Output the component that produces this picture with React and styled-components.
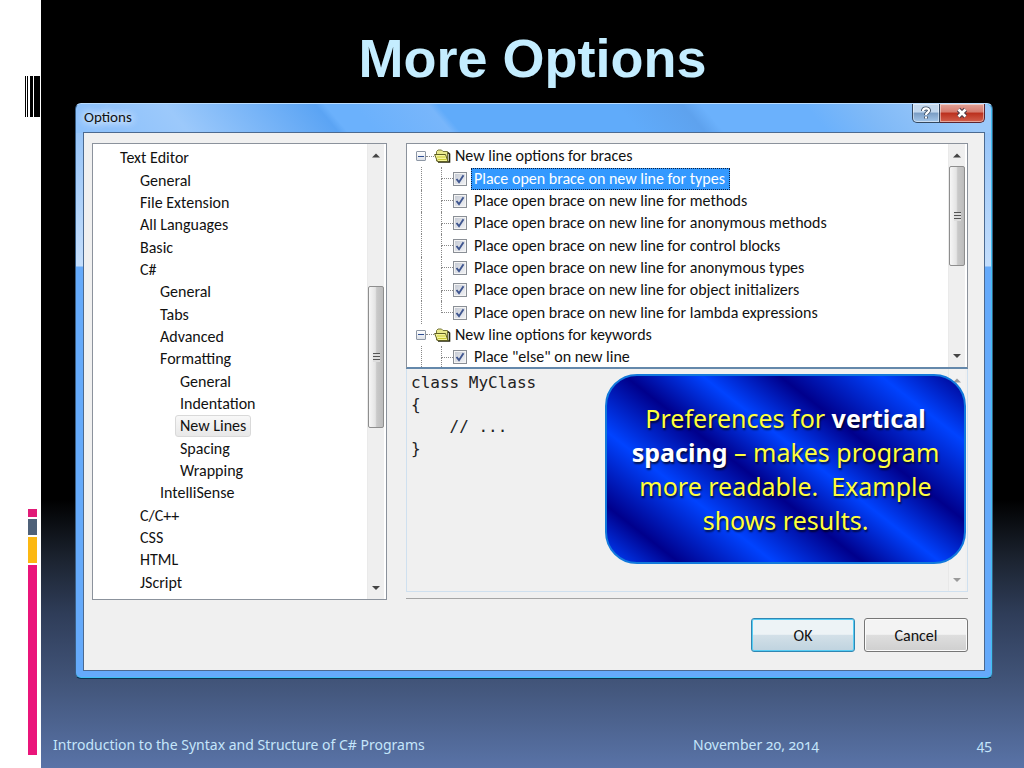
import React from 'react'
import styled, { createGlobalStyle, css } from 'styled-components'

const uiFont = `Carlito, Lato, 'Open Sans', sans-serif`
const slideFont = `Corbel, 'Noto Sans', sans-serif`

const GlobalStyle = createGlobalStyle`
  * { box-sizing: border-box; }
  body {
    margin: 0;
    background: #000;
  }
`

const Slide = styled.div`
  display: flex;
  min-height: 100vh;
  background: #fff;
`

// left decoration
const Rail = styled.aside`
  display: flex;
  flex-direction: column;
  flex: none;
  width: 41px;
  padding: 76px 1px 13px 25px;
`
const Barcode = styled.div`
  height: 41px;
  background: linear-gradient(
    to right,
    #000 0 1px, #fff 1px 2px, #000 2px 3px, #fff 3px 5px,
    #000 5px 8px, #fff 8px 9px, #000 9px 100%
  );
`
const Blocks = styled.div`
  display: flex;
  flex-direction: column;
  gap: 2px;
  width: 9px;
  margin: auto 0 0 3px;
`
const Block = styled.span`
  height: ${p => p.$size}px;
  background: ${p => p.$color};
`

const Main = styled.main`
  display: flex;
  flex-direction: column;
  flex: 1;
  min-width: 0;
  background: linear-gradient(
    to bottom,
    #000 0%, #000 65%, #1c2431 73%, #2f3d59 80%, #42557a 89%, #5973a7 100%
  );
`
const Title = styled.h1`
  margin: 0;
  height: 103px;
  padding-top: 23px;
  text-align: center;
  font: bold 54px/70px 'Arial Rounded MT Bold', 'Liberation Sans', sans-serif;
  color: #c4edff;
`

// dialog frame
const Dialog = styled.section`
  display: flex;
  flex-direction: column;
  flex: 1;
  margin: 0 31px 0 34px;
  padding: 0 7px 7px;
  border: 1px solid #3a5f86;
  border-top-color: #b9dcff;
  border-bottom-color: #0b3350;
  border-radius: 6px;
  box-shadow: inset 0 -1px 0 #3fc0f0, inset -1px 0 0 #3fc0f0;
  background:
    linear-gradient(50deg, #8fc2fb 0 4%, #9cc9fb 12%, #5ba4f4 28%, #6bb1fc 29% 32%, #78b6fb 40%, #60abfa 41% 60%, #5ea2ee 67%, #6bb1fc 69% 80%, #7fb9f7 86%, #9cc9fa 96%) top / 100% 29px no-repeat,
    linear-gradient(to bottom, #8fc0f8, #c4defc 162px, #65aafb 163px);
  font-family: ${uiFont};
  font-size: 16px;
  color: #111;
`
const TitleBar = styled.header`
  display: flex;
  justify-content: space-between;
  align-items: flex-start;
  height: 28px;
`
const Caption = styled.h2`
  margin: 0;
  padding: 0 1px;
  font: inherit;
  font-size: 15px;
  line-height: 27px;
  text-shadow: 0 0 8px #fff, 0 0 8px #fff;
`
const CaptionButtons = styled.div`
  display: flex;
`
const CaptionButton = styled.button`
  display: grid;
  place-items: center;
  width: ${p => (p.$close ? 45 : 28)}px;
  height: 19px;
  padding: 0;
  border: 1px solid #33475f;
  border-top: 0;
  border-radius: ${p => (p.$close ? '0 0 5px 0' : '0 0 0 5px')};
  box-shadow: inset 0 0 0 1px rgba(255, 255, 255, 0.45);
  background: linear-gradient(to bottom, #c3d8ee 0 45%, #7a9dc4 50%, #a4c6ea);
  ${p => p.$close && css`
    border-left: 0;
    border-color: #5b2430;
    background: linear-gradient(to bottom, #e3a298 0, #d57a6d 45%, #bb2f1d 50%, #d2604d);
  `}
`

const Client = styled.div`
  display: flex;
  flex-direction: column;
  flex: 1;
  padding: 10px 16px 18px 8px;
  border: 1px solid #4c6a90;
  background: #f0f0f0;
`
const Columns = styled.div`
  display: grid;
  grid-template-columns: 295fr 562fr;
  flex: 1;
  gap: 19px;
`
const CategoryPane = styled.nav`
  display: flex;
  border: 1px solid #8b929c;
  padding-right: 2px;
  background: #fff;
`
const Categories = styled.ul`
  display: grid;
  grid-auto-rows: 1fr;
  flex: 1;
  margin: 0;
  padding: 3px 0 5px;
  list-style: none;
`
const Category = styled.li`
  display: flex;
  align-items: center;
  padding-left: ${p => 22 + p.$depth * 20}px;
`
const CategoryLink = styled.a`
  padding: 0 4px;
  border: 1px solid ${p => (p.$current ? '#d9d9d9' : 'transparent')};
  border-radius: 3px;
  background: ${p => (p.$current ? 'linear-gradient(#f8f8f8, #e8e8e8)' : 'none')};
  line-height: 20px;
  color: inherit;
  text-decoration: none;
`

// scroll bars
const Bar = styled.div`
  display: flex;
  flex-direction: column;
  flex: none;
  width: 17px;
  background: ${p => (p.$disabled ? '#f2f2f2' : '#efefef')};
  border-left: 1px solid ${p => (p.$disabled ? '#e8e8e8' : '#eaeaea')};
`
const Arrow = styled.svg`
  flex: none;
  width: 16px;
  height: 22px;
  fill: ${p => (p.$disabled ? '#9a9a9a' : '#444')};
`
const Gap = styled.span`
  flex: ${p => p.$grow};
`
const Thumb = styled.span`
  flex: ${p => p.$grow};
  display: grid;
  place-items: center;
  border: 1px solid #8e8e8e;
  border-radius: 2px;
  background: linear-gradient(to right, #f6f6f6, #e4e4e4 45%, #c9c9c9 55%, #bcbcbc);
`
const Grip = styled.span`
  width: 7px;
  height: 9px;
  background: repeating-linear-gradient(to bottom, #555 0 1px, #ddd 1px 3px);
`

const Details = styled.div`
  display: flex;
  flex-direction: column;
  min-width: 0;
  border-bottom: 1px solid #a5a5a5;
  padding-bottom: 6px;
  margin-bottom: 1px;
  position: relative;
`
const TreePane = styled.div`
  display: flex;
  flex: 224;
  min-height: 0;
  padding-right: 2px;
  border: 1px solid #8b929c;
  border-bottom: 2px solid #6488ab;
  background: #fff;
  overflow: hidden;
`
// the last row runs on under the pane's edge
const Tree = styled.ul`
  display: grid;
  grid-auto-rows: 1fr;
  flex: 1;
  margin: 0 0 -2px;
  padding: 1px 0 0 9px;
  list-style: none;
`
const TreeRow = styled.li`
  display: flex;
  align-items: center;
`
const Dash = styled.span`
  width: 8px;
  border-top: 1px dotted #888;
`
const Expander = styled.button`
  display: grid;
  place-items: center;
  width: 10px;
  height: 10px;
  padding: 0;
  border: 1px solid #8d97a5;
  border-radius: 1px;
  background: linear-gradient(#fff, #dde1e8);
  &::before {
    content: '';
    width: 6px;
    height: 1px;
    background: #2f4f94;
  }
`
const GroupName = styled.span`
  padding-left: 4px;
  line-height: 22px;
`
const Trunk = styled.span`
  align-self: stretch;
  width: 20px;
  margin-left: 5px;
  border-left: 1px dotted #888;
`
const Branch = styled.span`
  display: flex;
  flex-direction: column;
  align-self: stretch;
  width: 12px;
  &::before {
    content: '';
    flex: 1;
    border-left: 1px dotted #888;
    border-bottom: 1px dotted #888;
  }
  &::after {
    content: '';
    flex: 1;
    border-left: 1px dotted ${p => (p.$last ? 'transparent' : '#888')};
  }
`
const Option = styled.label`
  display: flex;
  align-items: center;
  gap: 4px;
`
const CheckCell = styled.span`
  display: grid;
  place-items: center;
  > * { grid-area: 1 / 1; }
  svg { pointer-events: none; }
`
const CheckBox = styled.input`
  appearance: none;
  width: 14px;
  height: 14px;
  margin: 0;
  border: 1px solid #8a8f96;
  box-shadow: inset 0 0 0 1px #f4f4f4;
  background: linear-gradient(135deg, #c3c8d2, #f3f4f7);
`
const OptionText = styled.span`
  padding: 0 4px 0 2px;
  border: 1px dotted ${p => (p.$selected ? '#0d1f3c' : 'transparent')};
  background: ${p => (p.$selected ? '#3399ff' : 'none')};
  color: ${p => (p.$selected ? '#fff' : 'inherit')};
  line-height: 20px;
`

const Preview = styled.div`
  display: flex;
  flex: 224;
  border: 1px solid #cfe0ef;
  border-top: 0;
  padding-right: 2px;
`
const Code = styled.pre`
  flex: 1;
  margin: 0;
  padding: 3px 4px;
  font: 16px/22px Consolas, 'DejaVu Sans Mono', monospace;
  color: #222;
`
// sits over the code preview
const Callout = styled.aside`
  position: absolute;
  right: 2px;
  bottom: 34px;
  width: 361px;
  padding: 25px 16px;
  border: 2px solid #1279dc;
  border-radius: 32px;
  background: linear-gradient(
    38deg,
    #0043ff 0%, #00008c 12%, #0043ff 28%, #00008c 43%,
    #0043ff 56%, #00008c 69%, #0043ff 86%, #00008c 100%
  );
  font-family: ${slideFont};
  font-size: 25px;
  line-height: 34px;
  text-align: center;
  color: #ffff3c;
  text-shadow: 1px 2px 2px rgba(0, 0, 0, 0.7);
  strong { color: #fff; }
`

const Actions = styled.div`
  display: flex;
  justify-content: flex-end;
  gap: 9px;
  padding-top: 18px;
`
const ActionButton = styled.button`
  width: 104px;
  height: 34px;
  border: 1px solid #767676;
  border-radius: 3px;
  box-shadow: inset 0 0 0 1px #fbfbfb;
  background: linear-gradient(#f3f3f3 0 48%, #dedede 50%, #cfcfcf);
  font: inherit;
  color: #111;
  ${p => p.$primary && css`
    border-color: #2f87b3;
    box-shadow: inset 0 0 0 1px #57cdf4;
    background: linear-gradient(#edf3f6 0 48%, #d3e0e8 50%, #bfd3df);
  `}
`

const Footer = styled.footer`
  display: grid;
  grid-template-columns: 640fr 299fr;
  align-items: center;
  height: 89px;
  padding: 43px 32px 0 12px;
  font-family: ${slideFont};
  font-size: 14px;
  line-height: 20px;
  font-variant-numeric: oldstyle-nums;
  color: #c5e6fb;
  div {
    display: flex;
    justify-content: space-between;
  }
`

const categories = [
  ['Text Editor', 0], ['General', 1], ['File Extension', 1], ['All Languages', 1],
  ['Basic', 1], ['C#', 1], ['General', 2], ['Tabs', 2], ['Advanced', 2],
  ['Formatting', 2], ['General', 3], ['Indentation', 3], ['New Lines', 3],
  ['Spacing', 3], ['Wrapping', 3], ['IntelliSense', 2], ['C/C++', 1],
  ['CSS', 1], ['HTML', 1], ['JScript', 1],
]

const groups = [
  {
    name: 'New line options for braces',
    closed: true,
    options: [
      'Place open brace on new line for types',
      'Place open brace on new line for methods',
      'Place open brace on new line for anonymous methods',
      'Place open brace on new line for control blocks',
      'Place open brace on new line for anonymous types',
      'Place open brace on new line for object initializers',
      'Place open brace on new line for lambda expressions',
    ],
  },
  { name: 'New line options for keywords', options: ['Place "else" on new line'] },
]

const code = `class MyClass
{
    // ...
}`

function ScrollBar({ before, thumb, after, disabled }) {
  return (
    <Bar $disabled={disabled} aria-hidden="true">
      <Arrow $disabled={disabled} viewBox="0 0 16 22"><path d="M4 13.5L8 9.5L12 13.5Z" /></Arrow>
      <Gap $grow={before} />
      {thumb && <Thumb $grow={thumb}><Grip /></Thumb>}
      <Gap $grow={after} />
      <Arrow $disabled={disabled} viewBox="0 0 16 22"><path d="M4 9L8 13L12 9Z" /></Arrow>
    </Bar>
  )
}

function Folder() {
  return (
    <svg width="17" height="14" viewBox="0 0 17 14">
      <path d="M2.5 12V2.5L4 1H7.5L9 2.5H13.5V12Z" fill="#e9e98c" stroke="#77773a" />
      <path d="M14 3.5L15.5 5V13H4" fill="none" stroke="#26260f" strokeWidth="1.6" />
      <path d="M0.6 5.5H11.5L14 12.5H3.5Z" fill="#f5f59a" stroke="#5f5f22" />
      <path d="M3 8H11.5M4 10.5H12.5" stroke="#c9c934" />
    </svg>
  )
}

function TreeOption({ label, selected, last }) {
  return (
    <TreeRow>
      <Trunk />
      <Branch $last={last} />
      <Option>
        <CheckCell>
          <CheckBox type="checkbox" defaultChecked />
          <svg width="10" height="10" viewBox="0 0 10 10">
            <path d="M1.5 5L4 8.2L8.5 1.2" fill="none" stroke="#3f568f" strokeWidth="1.9" />
          </svg>
        </CheckCell>
        <OptionText $selected={selected}>{label}</OptionText>
      </Option>
    </TreeRow>
  )
}

function OptionsDialog() {
  return (
    <Dialog role="dialog" aria-labelledby="caption">
      <TitleBar>
        <Caption id="caption">Options</Caption>
        <CaptionButtons>
          <CaptionButton aria-label="Help">
            <svg width="12" height="14" viewBox="0 0 12 14" fill="none">
              <path d="M3 5C3 1.6 9 1.6 9 4.6C9 6.6 6 6.4 6 9M6 10.4V12.6" stroke="#3c4d63" strokeWidth="4" />
              <path d="M3 5C3 1.6 9 1.6 9 4.6C9 6.6 6 6.4 6 9M6 10.4V12.6" stroke="#fff" strokeWidth="2.2" />
            </svg>
          </CaptionButton>
          <CaptionButton $close aria-label="Close">
            <svg width="14" height="12" viewBox="0 0 14 12">
              <path d="M3.5 2.5L10.5 9.5M10.5 2.5L3.5 9.5" stroke="#4b3a48" strokeWidth="4.6" />
              <path d="M3.5 2.5L10.5 9.5M10.5 2.5L3.5 9.5" stroke="#fff" strokeWidth="2.6" />
            </svg>
          </CaptionButton>
        </CaptionButtons>
      </TitleBar>
      <Client>
        <Columns>
          <CategoryPane aria-label="Categories">
            <Categories>
              {categories.map(([name, depth], i) => (
                <Category key={i} $depth={depth}>
                  <CategoryLink href="#" $current={name === 'New Lines'}>{name}</CategoryLink>
                </Category>
              ))}
            </Categories>
            <ScrollBar before={121} thumb={140} after={150} />
          </CategoryPane>
          <Details>
            <TreePane>
              <Tree>
                {groups.map(group => (
                  <React.Fragment key={group.name}>
                    <TreeRow>
                      <Expander aria-label={'Collapse ' + group.name} />
                      <Dash />
                      <Folder />
                      <GroupName>{group.name}</GroupName>
                    </TreeRow>
                    {group.options.map((label, i) => (
                      <TreeOption
                        key={label}
                        label={label}
                        selected={group.closed && i === 0}
                        last={group.closed && i === group.options.length - 1}
                      />
                    ))}
                  </React.Fragment>
                ))}
              </Tree>
              <ScrollBar before={0} thumb={99} after={79} />
            </TreePane>
            <Preview>
              <Code>{code}</Code>
              <ScrollBar before={1} after={1} disabled />
            </Preview>
            <Callout>
              Preferences for <strong>vertical</strong> <strong>spacing</strong> – makes
              program more readable.&nbsp; Example shows results.
            </Callout>
          </Details>
        </Columns>
        <Actions>
          <ActionButton $primary>OK</ActionButton>
          <ActionButton>Cancel</ActionButton>
        </Actions>
      </Client>
    </Dialog>
  )
}

function App() {
  return (
    <>
      <GlobalStyle />
      <Slide>
        <Rail>
          <Barcode />
          <Blocks>
            <Block $size={8} $color="#e11b78" />
            <Block $size={16} $color="#4f6179" />
            <Block $size={26} $color="#fcb813" />
            <Block $size={190} $color="#ea157a" />
          </Blocks>
        </Rail>
        <Main>
          <Title>More Options</Title>
          <OptionsDialog />
          <Footer>
            <span>Introduction to the Syntax and Structure of C# Programs</span>
            <div>
              <span>November 20, 2014</span>
              <span>45</span>
            </div>
          </Footer>
        </Main>
      </Slide>
    </>
  )
}

export default App
